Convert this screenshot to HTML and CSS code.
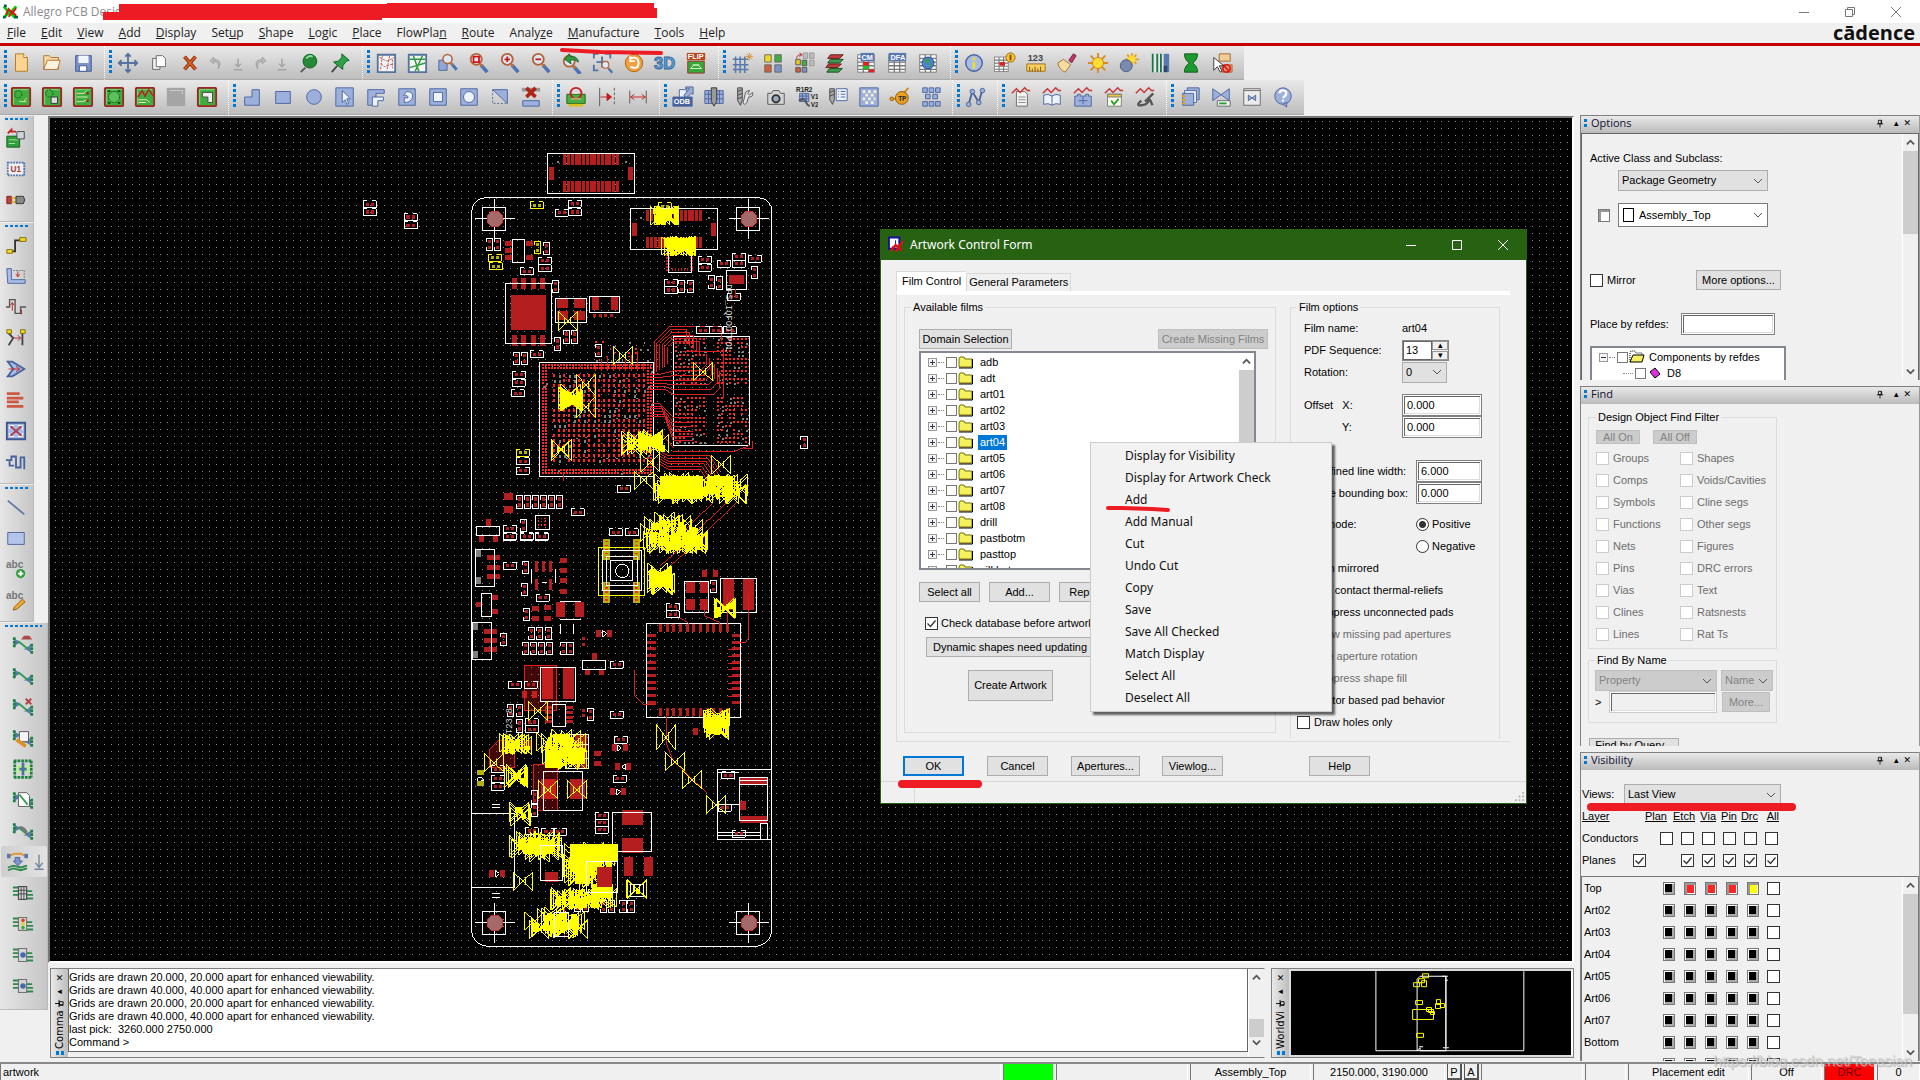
FILE: index.html
```html
<!DOCTYPE html>
<html lang="en">
<head>
<meta charset="utf-8">
<title>Allegro PCB Designer</title>
<link rel="stylesheet" href="styles.css">
</head>
<body>
<svg class="defs" aria-hidden="true">
  <symbol id="mag" viewBox="0 0 24 24"><path d="M14 14l7 8" stroke="#4a72b4" stroke-width="4"/><path d="M13 13l3 3" stroke="#c07030" stroke-width="2"/><circle cx="9" cy="8" r="6" fill="#dde8f6" stroke="#b4623a" stroke-width="2"/></symbol>
  <symbol id="pcb" viewBox="0 0 24 24"><rect x="2" y="2" width="20" height="20" rx="1" fill="#3fae3f" stroke="#a02626" stroke-width="2"/><path d="M4 20V4h16" stroke="#7fe07f" fill="none"/></symbol>
  <symbol id="net" viewBox="0 0 24 24"><path d="M2 6l6 3-6 0M2 12l6-3M22 12l-6 4h6M22 20l-6-4" stroke="#5878b0" stroke-width="2" fill="none"/><path d="M7 8l10 8" stroke="#2e9a4a" stroke-width="2"/><path d="M1 5h3M1 9h3M1 13h3M20 12h3M20 16h3M20 20h3" stroke="#1c8040" stroke-width="3"/></symbol>
  <symbol id="wave" viewBox="0 0 24 24"><path d="M2 8l5-5 4 4 5-5 3 3h3" stroke="#c43838" stroke-width="1.6" fill="none"/></symbol>
  <symbol id="grid" viewBox="0 0 24 24"><rect x="3" y="3" width="18" height="19" fill="#fff" stroke="#777"/><path d="M3 7h18M3 11h18M3 15h18M3 19h18M9 3v19M15 3v19" stroke="#777" stroke-width="1.4"/></symbol>
  <symbol id="chip" viewBox="0 0 24 24"><path d="M1 6h8v3M1 10h6M1 14h6M15 10h7M15 14h8M15 18h8" stroke="#2e8a4a" stroke-width="2" fill="none"/><rect x="7" y="5" width="9" height="14" fill="#d4d6da" stroke="#666"/></symbol>
  <symbol id="drop" viewBox="0 0 24 24"><path d="M12 6v10M8 13l4 4 4-4M6 21h12" stroke="#a4a4a4" stroke-width="2" fill="none"/></symbol>
  <symbol id="folder" viewBox="0 0 16 14"><path d="M1 12V4l1-2h4l1 2h7v8z" fill="#f4f060" stroke="#777000"/><path d="M14.500 4v9H1" stroke="#000" fill="none"/></symbol>
  <symbol id="pin" viewBox="0 0 10 10"><path d="M3 1h4v4H3zM1 5.500h8M5 5v5M6.500 1v4" stroke="#000" fill="none"/></symbol>
</svg>

<header class="titlebar">
  <svg class="appicon" viewBox="0 0 18 18"><path d="M2 3l4 5 4 1 5-6M3 14l5-5 6 6" stroke="#00d000" stroke-width="3" fill="none"/><path d="M4 12l3-6 4 4 4-5M7 14l4-5 4 4" stroke="#e01010" stroke-width="2" fill="none"/><path d="M2 1h3v3H2zM13 13h4v3h-4zM1 13h3v3H1z" fill="#064"/></svg>
  <h1>Allegro PCB Designer</h1>
  <div class="winctl">
    <button aria-label="Minimize"><svg viewBox="0 0 12 12"><path d="M1 6.500h10"/></svg></button>
    <button aria-label="Restore"><svg viewBox="0 0 12 12"><path d="M1.500 3.500h7v7h-7zM3.500 3V1.500h7v7H9"/></svg></button>
    <button aria-label="Close"><svg viewBox="0 0 12 12"><path d="M1 1l10 10M11 1L1 11"/></svg></button>
  </div>
</header>
<nav class="menubar">
  <a href="#"><u>F</u>ile</a><a href="#"><u>E</u>dit</a><a href="#"><u>V</u>iew</a><a href="#"><u>A</u>dd</a><a href="#"><u>D</u>isplay</a><a href="#">Set<u>u</u>p</a><a href="#"><u>S</u>hape</a><a href="#"><u>L</u>ogic</a><a href="#"><u>P</u>lace</a><a href="#">FlowPla<u>n</u></a><a href="#"><u>R</u>oute</a><a href="#">Analy<u>z</u>e</a><a href="#"><u>M</u>anufacture</a><a href="#"><u>T</u>ools</a><a href="#"><u>H</u>elp</a>
  <span class="logo">cādence</span>
</nav>

<div class="toolbars">
 <div class="row">
  <div class="group">
   <button class="tool" title="New"><svg viewBox="0 0 24 24"><path d="M6 2h9l4 4v15H6z" fill="#f9d591" stroke="#b07820"/><path d="M15 2v4h4" fill="#fff" stroke="#b07820"/></svg></button>
   <button class="tool" title="Open"><svg viewBox="0 0 24 24"><path d="M3 19V4h6l2 2h8v13z" fill="#f7d9a0" stroke="#b07030"/><path d="M7 9h14l-3 10H3z" fill="#fff3e0" stroke="#b07030"/></svg></button>
   <button class="tool" title="Save"><svg viewBox="0 0 24 24"><path d="M4 4h17v17H4z" fill="#7d93c8" stroke="#3c5590"/><path d="M7 4h11v8H7z" fill="#f2f5fb"/><path d="M8 15h8v6H8z" fill="#fff" stroke="#3c5590"/></svg></button>
  </div>
  <div class="group">
   <button class="tool" title="Move"><svg viewBox="0 0 24 24"><path d="M12 2v20M2 12h20M9 5l3-3 3 3M9 19l3 3 3-3M5 9l-3 3 3 3M19 9l3 3-3 3" stroke="#54739e" stroke-width="2" fill="none"/></svg></button>
   <button class="tool" title="Copy"><svg viewBox="0 0 24 24"><path d="M5 7h8v12H5z" fill="#eee" stroke="#666"/><path d="M9 4h7l3 3v9H9z" fill="#fff" stroke="#666"/></svg></button>
   <button class="tool" title="Delete"><svg viewBox="0 0 24 24"><path d="M6 5l12 14M18 5L6 19" stroke="#7c2410" stroke-width="4"/><path d="M6 5l12 14M18 5L6 19" stroke="#e0601c" stroke-width="2"/></svg></button>
   <button class="tool slim" title="Undo"><svg viewBox="0 0 24 24"><path d="M9 4L4 9l5 4V10q8 0 6 10 7-12-6-13z" fill="#b9b9b9" stroke="#999"/></svg></button>
   <button class="tool slim" title="Undo list"><svg><use href="#drop"/></svg></button>
   <button class="tool slim" title="Redo"><svg viewBox="0 0 24 24"><path d="M15 4l5 5-5 4V10q-8 0-6 10-7-12 6-13z" fill="#b9b9b9" stroke="#999"/></svg></button>
   <button class="tool slim" title="Redo list"><svg><use href="#drop"/></svg></button>
   <button class="tool" title="Fix"><svg viewBox="0 0 24 24"><path d="M8 17l-5 5" stroke="#555" stroke-width="2"/><circle cx="13" cy="10" r="7.500" fill="#258a38" stroke="#0f5a20"/><path d="M9 7q3-4 7-2" stroke="#8fe09a" stroke-width="2" fill="none"/></svg></button>
   <button class="tool" title="Unfix"><svg viewBox="0 0 24 24"><path d="M9 15l-6 7" stroke="#444" stroke-width="2"/><path d="M14 2l8 7-3 1-4 5 0 4L5 11l5-1 4-4z" fill="#2da347" stroke="#0f5a20"/></svg></button>
  </div>
  <div class="group">
   <button class="tool" title="Unrats all"><svg viewBox="0 0 24 24"><path d="M3 3h19v19H3z" fill="#f4f4f4" stroke="#54739e" stroke-width="2"/><path d="M5 6l8 4 8-4M6 12l4 4 10-3M8 4l-2 16M16 4l-3 16M19 8l0 10" stroke="#b85a5a" stroke-dasharray="3 1" fill="none"/></svg></button>
   <button class="tool" title="Rats all"><svg viewBox="0 0 24 24"><path d="M3 3h19v19H3z" fill="#f4f4f4" stroke="#54739e" stroke-width="2"/><path d="M4 8h17M4 17l17-5M8 4l6 17M18 4l-8 17" stroke="#2e9a3e" stroke-width="1.600" fill="none"/></svg></button>
   <button class="tool" title="Zoom by points"><svg viewBox="0 0 24 24"><path d="M2 9h9v11H2z" fill="#8fa6d8" stroke="#47639c"/><use href="#mag" x="4" y="0" width="20" height="22"/></svg></button>
   <button class="tool" title="Zoom fit"><svg viewBox="0 0 24 24"><use href="#mag"/><path d="M6 5h6v6H6z" fill="none" stroke="#d01818" stroke-width="2"/></svg></button>
   <button class="tool" title="Zoom in"><svg viewBox="0 0 24 24"><use href="#mag"/><path d="M9 5v6M6 8h6" stroke="#d01818" stroke-width="2"/></svg></button>
   <button class="tool" title="Zoom out"><svg viewBox="0 0 24 24"><use href="#mag"/><path d="M6 8h6" stroke="#d01818" stroke-width="2"/></svg></button>
   <button class="tool" title="Zoom previous"><svg viewBox="0 0 24 24"><use href="#mag" y="2"/><path d="M4 8l5-6 1 3q8-1 9 6-4-4-9-2l1 4z" fill="#2e9a3e" stroke="#14641f"/></svg></button>
   <button class="tool" title="Zoom selection"><svg viewBox="0 0 24 24"><path d="M2 7V2h5M14 2h6v5M2 14v6h5M11 5v12M5 11h12" stroke="#54739e" stroke-width="2" fill="none"/><use href="#mag" x="9" y="9" width="15" height="15"/></svg></button>
   <button class="tool" title="Redraw"><svg viewBox="0 0 24 24"><circle cx="12" cy="12" r="9.500" fill="#f0a040" stroke="#b06010"/><path d="M8 7q9-3 9 5t-9 4M8 4v6h5" stroke="#fff" stroke-width="2" fill="none"/></svg></button>
   <button class="tool" title="3D view"><svg viewBox="0 0 24 24"><text x="0" y="19" class="ic3d">3D</text></svg></button>
   <button class="tool" title="Flip design"><svg viewBox="0 0 24 24"><path d="M2 1h20v8H2z" fill="#b5481c"/><text x="3" y="8" class="icflip">FLIP</text><path d="M3 10h18v13H3z" fill="#38a838" stroke="#a02626"/><path d="M6 18q6-8 12 0zM8 14h8" fill="none" stroke="#d8f4d0"/></svg></button>
  </div>
  <div class="group">
   <button class="tool" title="Grid toggle"><svg viewBox="0 0 24 24"><path d="M2 8h17M2 14h17M2 19h17M5 5v18M10 5v18M15 5v18" stroke="#5878b0" stroke-width="1.600"/><path d="M20 1v8M16 5h8M17 2l6 6M23 2l-6 6" stroke="#d89030"/></svg></button>
   <button class="tool" title="Color"><svg viewBox="0 0 24 24"><path d="M3 3h7v8H3z" fill="#f0d820" stroke="#666"/><path d="M14 3h7v8h-7z" fill="#3fae3f" stroke="#666"/><path d="M3 14h7v8H3z" fill="#d06038" stroke="#666"/><path d="M14 14h7v8h-7z" fill="#7d93c8" stroke="#666"/></svg></button>
   <button class="tool" title="Shadow"><svg viewBox="0 0 24 24"><path d="M11 1h5v6h-5zM18 1h5v6h-5zM18 9h5v6h-5z" fill="#bbb" stroke="#999"/><path d="M3 8h5v6H3z" fill="#e8c820" stroke="#555"/><path d="M10 9h5v6h-5z" fill="#3fae3f" stroke="#555"/><path d="M3 17h5v5H3z" fill="#d06038" stroke="#555"/><path d="M10 17h5v5h-5z" fill="#7d93c8" stroke="#555"/><path d="M4 7q0-4 5-4M7 1l3 2-3 2" stroke="#c02020" fill="none"/></svg></button>
   <button class="tool" title="Layers"><svg viewBox="0 0 24 24"><path d="M7 3h14l-4 4H4z" fill="#c03c3c" stroke="#5b1b1b"/><path d="M7 8h14l-4 4H4z" fill="#3f9a50" stroke="#1b4b1b"/><path d="M5 13h14l-4 4H2z" fill="#c03c3c" stroke="#5b1b1b"/><path d="M6 18h14l-4 4H3z" fill="#3f9a50" stroke="#1b4b1b"/></svg></button>
   <button class="tool" title="Constraint manager"><svg viewBox="0 0 24 24"><use href="#grid"/><path d="M6 1h15v9H6z" fill="#5878b0"/><text x="7" y="9" class="icflip">CM</text><path d="M9 11h6v4H9zM15 19h6v3h-6z" fill="#e02020"/><path d="M9 15h6v4H9z" fill="#20c020"/></svg></button>
   <button class="tool" title="DFA"><svg viewBox="0 0 24 24"><use href="#grid"/><path d="M3 1h19v9H3z" fill="#5878b0"/><text x="5" y="9" class="icflip">DFA</text></svg></button>
   <button class="tool" title="Global"><svg viewBox="0 0 24 24"><use href="#grid"/><circle cx="12" cy="12" r="6.500" fill="#5080d0" stroke="#204890"/><path d="M8 9l5-2 1 3-3 3zM13 14l4-2-2 5z" fill="#38a048"/></svg></button>
  </div>
  <div class="group">
   <button class="tool" title="Information"><svg viewBox="0 0 24 24"><circle cx="12" cy="12" r="9" fill="#a9bce6" stroke="#47639c" stroke-width="1.500"/><path d="M12 6v3M12 11v7" stroke="#f0e020" stroke-width="3"/></svg></button>
   <button class="tool" title="Report"><svg viewBox="0 0 24 24"><use href="#grid" x="-2" y="2" width="20" height="22"/><path d="M6 11h6v4H6z" fill="#e02020"/><circle cx="18" cy="6" r="5" fill="#f4c820" stroke="#a06010"/><path d="M18 3v6" stroke="#804000" stroke-width="2"/></svg></button>
   <button class="tool" title="Measure"><svg viewBox="0 0 24 24"><text x="3" y="10" class="ic123">123</text><path d="M2 13h20v8H2z" fill="#f7d060" stroke="#a06a18"/><path d="M5 16v5M8 18v3M11 16v5M14 18v3M17 16v5" stroke="#805010"/></svg></button>
   <button class="tool" title="Brush"><svg viewBox="0 0 24 24"><path d="M14 9l5-7 3 2-5 8z" fill="#c03868" stroke="#702040"/><path d="M8 8l8 6-6 8q-7-3-8-10z" fill="#f5dca0" stroke="#a07030"/></svg></button>
   <button class="tool" title="Highlight"><svg viewBox="0 0 24 24"><path d="M12 1v22M1 12h22M4 4l16 16M20 4L4 20" stroke="#d88a20" stroke-width="2"/><circle cx="12" cy="12" r="6" fill="#ffdc30" stroke="#c88018"/></svg></button>
   <button class="tool" title="Dehighlight"><svg viewBox="0 0 24 24"><path d="M15 1v14M8 8h15M10 3l10 10M20 3L10 13" stroke="#e0a020" stroke-width="2"/><circle cx="15" cy="8" r="4" fill="#ffdc30"/><circle cx="9" cy="15" r="6.500" fill="#7a8bb0" stroke="#4a5878"/></svg></button>
   <button class="tool" title="Waive DRC"><svg viewBox="0 0 24 24"><path d="M2 2h20v20H2z" fill="#dfe8e4"/><path d="M4 2v20M9 2v20M13 2v20" stroke="#207048" stroke-width="2"/><path d="M16 2h6v20h-6z" fill="#5878b0"/><path d="M16 15h4v7h-4z" fill="#304870"/></svg></button>
   <button class="tool" title="Hourglass"><svg viewBox="0 0 24 24"><path d="M5 2h14v3q-1 4-5 7 4 3 5 7v3H5v-3q1-4 5-7-4-3-5-7z" fill="#1c9a30" stroke="#0c5818"/></svg></button>
   <button class="tool" title="Selection filter"><svg viewBox="0 0 24 24"><path d="M9 2h12v8H9z" fill="#f0cc98" stroke="#a06830"/><path d="M12 14h11v8H12z" fill="#f0a070" stroke="#a06830"/><circle cx="17" cy="18" r="4" fill="none" stroke="#d82020" stroke-width="2"/><path d="M14 15l6 6" stroke="#d82020" stroke-width="2"/><path d="M3 6v14l4-4 3 6 2-1-3-6h5z" fill="#fff" stroke="#333"/></svg></button>
  </div>
 </div>
 <div class="row">
  <div class="group">
   <button class="tool" title="General edit"><svg viewBox="0 0 24 24"><use href="#pcb"/><circle cx="9" cy="9" r="4" fill="none" stroke="#124a12" stroke-dasharray="2 1"/><path d="M10 17h5l3-4M18 17h-3" stroke="#e8e0a0" fill="none"/></svg></button>
   <button class="tool" title="Placement edit"><svg viewBox="0 0 24 24"><use href="#pcb"/><circle cx="9" cy="8" r="4" fill="none" stroke="#124a12" stroke-dasharray="2 1"/><path d="M11 12h7v7h-7z" fill="#ddd" stroke="#333"/></svg></button>
   <button class="tool" title="Etch edit"><svg viewBox="0 0 24 24"><use href="#pcb"/><path d="M5 8h8l3-3M5 12h12M5 17h7l4-2" stroke="#f0e8c0" fill="none"/><circle cx="17" cy="8" r="1.500" fill="#a02626"/><circle cx="17" cy="16" r="1.500" fill="#a02626"/></svg></button>
   <button class="tool" title="Flow planning"><svg viewBox="0 0 24 24"><use href="#pcb"/><circle cx="12" cy="12" r="6" fill="#5cc05c" stroke="#124a12" stroke-dasharray="2 1"/><path d="M5 6l3-1M16 5l3 1M5 18l3 1M16 19l3-1" stroke="#124a12" stroke-width="2" fill="none"/></svg></button>
   <button class="tool" title="Signal integrity"><svg viewBox="0 0 24 24"><use href="#pcb"/><path d="M4 12l5-7 3 6 4-7 5 7" stroke="#c02020" stroke-width="1.600" fill="none"/><path d="M5 15h9l3 3M5 18h8" stroke="#f0e8c0" fill="none"/></svg></button>
   <button class="tool" title="RF edit"><svg viewBox="0 0 24 24"><path d="M2 2h20v20H2z" fill="#a5a5a5"/><path d="M5 5h14v4" stroke="#d0d0d0" fill="none"/></svg></button>
   <button class="tool" title="Shape edit"><svg viewBox="0 0 24 24"><use href="#pcb"/><path d="M7 7h11v11h-5v-6H7z" fill="#eee" stroke="#444"/></svg></button>
  </div>
  <div class="group blues">
   <button class="tool" title="Shape polygon"><svg viewBox="0 0 24 24"><path d="M12 4h8v17H4V12h8z"/></svg></button>
   <button class="tool" title="Shape rectangle"><svg viewBox="0 0 24 24"><path d="M4 6h16v13H4z"/></svg></button>
   <button class="tool" title="Shape circle"><svg viewBox="0 0 24 24"><circle cx="12" cy="12" r="8"/></svg></button>
   <button class="tool" title="Shape select"><svg viewBox="0 0 24 24"><path d="M2 2h19v20H2z"/><path d="M9 5v13l3-3 2 5 2-1-2-5h4z" class="w"/></svg></button>
   <button class="tool" title="Void element"><svg viewBox="0 0 24 24"><path d="M3 4h18v4H12v13H3z"/><path d="M8 12h12v4h-6v6H8z" class="w"/></svg></button>
   <button class="tool" title="Void polygon"><svg viewBox="0 0 24 24"><path d="M3 3h18v18H3z"/><path d="M12 6q7 0 6 6t-9 6l0-5h4q1-3-5-3z" class="w"/></svg></button>
   <button class="tool" title="Void rectangle"><svg viewBox="0 0 24 24"><path d="M3 3h18v18H3z"/><path d="M7 7h10v10H7z" class="w"/></svg></button>
   <button class="tool" title="Void circle"><svg viewBox="0 0 24 24"><path d="M3 3h18v18H3z"/><circle cx="12" cy="12" r="6" class="w"/></svg></button>
   <button class="tool" title="Edit boundary"><svg viewBox="0 0 24 24"><path d="M4 4h16v15z"/><path d="M4 4v15h16" fill="none" stroke-dasharray="2 2"/></svg></button>
   <button class="tool" title="Delete islands"><svg viewBox="0 0 24 24"><path d="M3 16h18v6H3z"/><path d="M2 2h20v4H2z" fill="#999" stroke="none"/><path d="M7 2l10 10M17 2L7 12" stroke="#b02418" stroke-width="4"/></svg></button>
  </div>
  <div class="group">
   <button class="tool" title="Drill legend"><svg viewBox="0 0 24 24"><path d="M2 9h20v10H2z" fill="#48b040" stroke="#186018"/><path d="M4 21h16" stroke="#d8c020" stroke-width="3"/><circle cx="12" cy="8" r="6" fill="none" stroke="#c82020" stroke-width="2"/><path d="M7 14h10M9 8h6" stroke="#f0e8c0"/></svg></button>
   <button class="tool" title="Dimension edge"><svg viewBox="0 0 24 24"><path d="M4 2v20" stroke="#555"/><path d="M20 2v20" stroke="#555" stroke-dasharray="3 2"/><path d="M5 12h10M12 8l5 4-5 4z" fill="#c02020" stroke="#c02020"/></svg></button>
   <button class="tool" title="Linear dimension"><svg viewBox="0 0 24 24"><path d="M3 5v14M21 5v14" stroke="#555"/><path d="M4 12h16M8 9l-4 3 4 3M16 9l4 3-4 3" fill="none" stroke="#c02020"/></svg></button>
  </div>
  <div class="group blues">
   <button class="tool" title="ODB export"><svg viewBox="0 0 24 24"><path d="M8 4h8v10H8z" class="w"/><path d="M13 10l6-7h-4V1h8v8l-2-1-6 6z"/><path d="M1 12h21v10H1z" fill="#47639c"/><text x="2" y="20" class="icflip">ODB</text></svg></button>
   <button class="tool" title="Artwork"><svg viewBox="0 0 24 24"><path d="M2 5h20v14H2zM2 9h20M2 14h20M6 5v14M18 5v14"/><path d="M9 2h6v15l-3 5-3-5z" fill="#999" stroke="#333"/></svg></button>
   <button class="tool" title="NC parameters"><svg viewBox="0 0 24 24"><path d="M4 2h5v14l-2 5-3-5zM4 6l5-2M4 10l5-2M4 14l5-2" fill="#aaa" stroke="#444"/><path d="M20 7l-3 3-2-2 2-3q-5 0-5 5l-2 8q1 4 4 0l2-6q6 0 4-5z" fill="#e0e4ea" stroke="#555"/></svg></button>
   <button class="tool" title="Snapshot"><svg viewBox="0 0 24 24"><path d="M3 8h4l2-3h6l2 3h4v12H3z" fill="#d4d4d4" stroke="#555"/><circle cx="12" cy="14" r="4" fill="#9ab" stroke="#333" stroke-width="2"/></svg></button>
   <button class="tool" title="Rename refdes"><svg viewBox="0 0 24 24"><text x="0" y="6" class="ictiny">R1R2</text><path d="M4 8h10v9H4zM4 11h10M4 14h10M7 8v9M11 8v9"/><path d="M3 16l5-2 2 2q2 5 5 6" fill="none" stroke="#555" stroke-width="2"/><text x="16" y="14" class="ictiny">V1</text><text x="16" y="23" class="ictiny">V2</text></svg></button>
   <button class="tool" title="Drill table"><svg viewBox="0 0 24 24"><path d="M3 3h5v12l-2 5-3-5zM3 7l5-2M3 11l5-2" fill="#aaa" stroke="#444"/><path d="M10 3h12v13H10z" class="w"/><path d="M12 6h1M15 6h5M12 9h1M15 9h5M12 12h1M15 12h5"/></svg></button>
   <button class="tool" title="Thieving"><svg viewBox="0 0 24 24"><path d="M2 2h20v20H2z"/><path d="M5 6h3M11 6h3M17 6h3M8 10h3M14 10h3M5 14h3M11 14h3M17 14h2M8 18h3M14 18h3" stroke="#f4f0d0" stroke-width="3"/></svg></button>
   <button class="tool" title="Testpoint"><svg viewBox="0 0 24 24"><path d="M2 14h8M16 8l5-6" stroke="#d08818" stroke-width="2"/><circle cx="3" cy="14" r="2" fill="#e8a020" stroke="#905808"/><circle cx="14" cy="13" r="7" fill="#e8a020" stroke="#905808"/><text x="10" y="16" class="ictiny">TP</text></svg></button>
   <button class="tool" title="Panelize"><svg viewBox="0 0 24 24"><path d="M3 2h5v5H3zM10 2h5v5h-5zM17 2h5v5h-5zM6 9h5v5H6zM14 9h5v5h-5zM3 17h5v5H3zM10 17h5v5h-5zM17 17h5v5h-5z"/></svg></button>
  </div>
  <div class="group blues">
   <button class="tool" title="Net route"><svg viewBox="0 0 24 24"><path d="M4 20L8 6l7 12 4-14" fill="none" stroke-width="2"/><circle cx="4" cy="20" r="2.500"/><circle cx="8" cy="6" r="2.500"/><circle cx="15" cy="18" r="2.500"/><circle cx="19" cy="5" r="2.500"/></svg></button>
  </div>
  <div class="group blues">
   <button class="tool" title="Signal report"><svg viewBox="0 0 24 24"><path d="M7 6h9l3 3v13H7z" fill="#f2f2f2" stroke="#666"/><path d="M9 12h8M9 15h8M9 18h8" stroke="#888"/><use href="#wave"/></svg></button>
   <button class="tool" title="Signal library"><svg viewBox="0 0 24 24"><path d="M3 10q5-2 9 1 4-3 9-1v10q-5-2-9 1-4-3-9-1zM12 11v10" class="w"/><use href="#wave"/></svg></button>
   <button class="tool" title="Signal model"><svg viewBox="0 0 24 24"><path d="M3 11h3v-2h3v2h6v-2h3v2h3v11H3z"/><path d="M12 12v8M7 16h10" class="w"/><use href="#wave"/></svg></button>
   <button class="tool" title="Signal audit"><svg viewBox="0 0 24 24"><path d="M5 9h15v13H5z" fill="#fffef0" stroke="#777"/><path d="M5 9h15v3H5z" fill="#e8c840" stroke="#777"/><path d="M9 16l3 4 5-6" fill="none" stroke="#20a030" stroke-width="2"/><use href="#wave"/></svg></button>
   <button class="tool" title="Signal probe"><svg viewBox="0 0 24 24"><path d="M21 8l-9 9M8 16q-7 6 0 5t8-5 4 5" fill="none" stroke="#555" stroke-width="2.500"/><use href="#wave"/></svg></button>
  </div>
  <div class="group blues">
   <button class="tool" title="Reports"><svg viewBox="0 0 24 24"><path d="M9 2h13v13H9z"/><path d="M6 5h13v13H6z" class="w"/><path d="M4 8h12v13H4z"/><path d="M3 11h4M3 15h4M3 19h4" stroke="#e0a020" stroke-width="2"/></svg></button>
   <button class="tool" title="DRC update"><svg viewBox="0 0 24 24"><path d="M3 3l18 13V3L3 16z"/><path d="M8 16h14v6H8z" fill="#f4f4f4" stroke="#666"/><path d="M10 19h8" stroke="#20a030" stroke-width="2"/></svg></button>
   <button class="tool" title="DRC browser"><svg viewBox="0 0 24 24"><path d="M3 3h18v18H3z" fill="#ececec" stroke="#666"/><path d="M3 5h18" stroke="#666"/><path d="M8 10l8 6v-6l-8 6z"/></svg></button>
   <button class="tool" title="Help"><svg viewBox="0 0 24 24"><circle cx="12" cy="11" r="9"/><path d="M12 20l4 3v-5z"/><path d="M8 8q1-4 5-3t2 5l-3 3M12 15v2" fill="none" stroke="#fff" stroke-width="2.500"/></svg></button>
  </div>
 </div>
</div>

<main class="workspace">
 <aside class="sidebars">
  <div class="vbar">
   <button class="tool" title="Place manual"><svg viewBox="0 0 24 24"><path d="M2 10h14v12H2z" fill="#2fa03c" stroke="#125a1c"/><path d="M4 14h10M4 18h7" stroke="#a8e8a8"/><path d="M13 5h8v8h-8z" fill="#d0d4dc" stroke="#444"/><path d="M3 7l4-4v2h5" stroke="#c02020" stroke-width="2" fill="none"/></svg></button>
   <button class="tool" title="Place component"><svg viewBox="0 0 24 24"><path d="M3 5h18v14H3z" fill="#eee" stroke="#5070a8" stroke-width="2" stroke-dasharray="2 1"/><text x="6" y="15" class="icred">U1</text></svg></button>
   <button class="tool" title="Place part"><svg viewBox="0 0 24 24"><path d="M2 8h5v8H2z" fill="#c04040" stroke="#702020"/><path d="M7 10h6M7 14h6" stroke="#e0b020" stroke-width="2"/><path d="M12 8h8q3 4 0 8h-8z" fill="#888" stroke="#333"/></svg></button>
  </div>
  <div class="vbar">
   <button class="tool" title="Add connect"><svg viewBox="0 0 24 24"><path d="M3 19h8V7h9" stroke="#333" stroke-width="2" fill="none"/><path d="M2 17h6v4H2zM16 4h7v4h-7z" fill="#f4dc20" stroke="#806800"/></svg></button>
   <button class="tool" title="Slide"><svg viewBox="0 0 24 24"><path d="M2 4h5v12h15v4H3z" fill="#a9bce6" stroke="#47639c"/><path d="M9 6h12v8" stroke="#777" stroke-dasharray="2 1" fill="none"/><path d="M14 7v5M12 10l2 3 2-3" stroke="#c02020" fill="none"/></svg></button>
   <button class="tool" title="Delay tune"><svg viewBox="0 0 24 24"><path d="M1 12h4V4h6v15h6v-7h6" stroke="#555" stroke-width="1.500" fill="none"/><path d="M8 16V8M6 10l2-3 2 3M18 15v5" stroke="#c02020" fill="none"/></svg></button>
   <button class="tool" title="Custom smooth"><svg viewBox="0 0 24 24"><path d="M4 7l5 5-5 8M19 5v15" stroke="#444" stroke-width="2" fill="none"/><path d="M10 12h7M14 9l3 3-3 3" stroke="#c02020" fill="none"/><path d="M2 3h5v4H2zM17 3h5v4h-5z" fill="#f4dc20" stroke="#806800"/></svg></button>
   <button class="tool" title="Fanout"><svg viewBox="0 0 24 24"><path d="M3 4h5l13 8-13 8H3l6-8z" fill="#a9bce6" stroke="#47639c" stroke-width="2"/><path d="M4 12h12M12 9l4 3-4 3" stroke="#c02020" fill="none"/></svg></button>
   <button class="tool" title="Bus route"><svg viewBox="0 0 24 24"><path d="M2 5h14M2 10h18M2 14h13M2 19h18" stroke="#cc5840" stroke-width="3"/></svg></button>
   <button class="tool" title="Route"><svg viewBox="0 0 24 24"><path d="M2 3h20v18H2z" fill="#a9bce6" stroke="#3c5590" stroke-width="2"/><path d="M5 6l14 12M19 6L5 18" stroke="#b04050" stroke-width="2"/><path d="M5 10V6h5M14 6h5v5M5 14v4h5M19 14v4h-5" stroke="#fff" fill="none"/></svg></button>
   <button class="tool" title="Spread"><svg viewBox="0 0 24 24"><path d="M1 10h6V6h5v12h5V7h4v13M5 10v6h5" stroke="#47639c" stroke-width="2" fill="none"/></svg></button>
  </div>
  <div class="vbar">
   <button class="tool" title="Add line"><svg viewBox="0 0 24 24"><path d="M3 5l18 15" stroke="#6078a8" stroke-width="2"/></svg></button>
   <button class="tool" title="Add rectangle"><svg viewBox="0 0 24 24"><path d="M3 6h18v13H3z" fill="#b4c4ea" stroke="#47639c"/></svg></button>
   <button class="tool" title="Add text"><svg viewBox="0 0 24 24"><text x="1" y="11" class="icabc">abc</text><circle cx="17" cy="17" r="5" fill="#2a9c3a"/><path d="M17 14v6M14 17h6" stroke="#fff" stroke-width="2"/></svg></button>
   <button class="tool" title="Edit text"><svg viewBox="0 0 24 24"><text x="1" y="11" class="icabc">abc</text><path d="M10 20l9-9 3 3-9 8-4 1z" fill="#f0a830" stroke="#905808"/></svg></button>
  </div>
  <div class="vbar wide">
   <button class="tool" title="Net fix"><svg viewBox="0 0 24 24"><use href="#net"/><path d="M10 6h12l-3-4h-6z" fill="#b04848"/></svg></button>
   <button class="tool" title="Net plan"><svg><use href="#net"/></svg></button>
   <button class="tool" title="Net delete"><svg viewBox="0 0 24 24"><use href="#net"/><path d="M15 3l6 6M21 3l-6 6" stroke="#b04040" stroke-width="2"/></svg></button>
   <button class="tool" title="Net edit"><svg viewBox="0 0 24 24"><use href="#net"/><path d="M8 5h10v11H8z" fill="#f4f4f4" stroke="#555"/><path d="M5 14l10 7" stroke="#e09020" stroke-width="4"/></svg></button>
   <button class="tool" title="Net bundle"><svg viewBox="0 0 24 24"><path d="M2 3h20M2 21h20M3 3v18M21 3v18" stroke="#1c8040" stroke-width="3" stroke-dasharray="3 1"/><path d="M5 8h14v8H5z" fill="#b8f090"/><path d="M12 5v14M8 12h8" stroke="#5070a8" stroke-width="3"/></svg></button>
   <button class="tool" title="Net report"><svg viewBox="0 0 24 24"><use href="#net"/><path d="M7 4h9l3 3v12H7z" fill="#fff" stroke="#555"/><path d="M8 6l9 11" stroke="#2e9a4a" stroke-width="2"/></svg></button>
   <button class="tool" title="Net route"><svg viewBox="0 0 24 24"><use href="#net"/><path d="M8 8q7 0 8 8" stroke="#777" stroke-width="3" fill="none"/></svg></button>
   <div class="pair"><button class="tool" title="Flow auto"><svg viewBox="0 0 24 24"><path d="M2 5h3l4-2h7l4 2h3" stroke="#e09830" stroke-width="2" fill="none"/><path d="M1 3h4v5H1zM20 3h4v5h-4z" fill="#5878b0"/><path d="M2 18l6-2 8 2 7-2M2 21l6-2 8 2 7-2" stroke="#2e8a4a" stroke-width="2" fill="none"/><path d="M10 7h5v4h3l-5 5-5-5h2z" fill="#7d93c8" stroke="#47639c"/></svg></button><button class="more" aria-label="More"><svg viewBox="0 0 14 20"><path d="M7 2v13M3 11l4 5 4-5M2 18h10" stroke="#6e8498" stroke-width="1.500" fill="none"/></svg></button></div>
   <button class="tool" title="Table"><svg viewBox="0 0 24 24"><use href="#chip"/><path d="M7 5h9v14H7zM7 9h9M7 13h9M10 5v14M13 5v14" stroke="#444" fill="none"/></svg></button>
   <button class="tool" title="Status"><svg viewBox="0 0 24 24"><use href="#chip"/><circle cx="12" cy="8" r="2" fill="#e04020"/><circle cx="12" cy="12" r="2" fill="#e8d020"/><circle cx="12" cy="16" r="2" fill="#30b030"/></svg></button>
   <button class="tool" title="Pin in"><svg viewBox="0 0 24 24"><use href="#chip"/><circle cx="12" cy="12" r="3" fill="#4868b0"/></svg></button>
   <button class="tool" title="Pin out"><svg viewBox="0 0 24 24"><use href="#chip"/><circle cx="12" cy="12" r="3" fill="#4868b0"/></svg></button>
  </div>
 </aside>

 <section class="center">
  <div class="canvas"><svg id="board" role="img" aria-label="Board layout">
   <defs><pattern id="dots" width="7" height="7" patternUnits="userSpaceOnUse"><rect x="5" y="3" width="1" height="1" fill="#8a8a8a"/></pattern></defs>
   <rect width="100%" height="100%" fill="url(#dots)"/>
  </svg></div>
  <div class="dock">
   <section class="command">
    <div class="strip"><span class="sx">✕</span><span class="sa">◂</span><svg class="sp"><use href="#pin"/></svg><b>Command</b><i></i></div>
    <div class="log">Grids are drawn 20.000, 20.000 apart for enhanced viewability.<br>Grids are drawn 40.000, 40.000 apart for enhanced viewability.<br>Grids are drawn 20.000, 20.000 apart for enhanced viewability.<br>Grids are drawn 40.000, 40.000 apart for enhanced viewability.<br>last pick:&nbsp; 3260.000 2750.000<br>Command &gt;</div>
    <div class="scroll end"><svg viewBox="0 0 10 10"><path d="M1 7l4-4 4 4"/></svg><div class="thumb t-log"></div><svg viewBox="0 0 10 10"><path d="M1 3l4 4 4-4"/></svg></div>
   </section>
   <section class="world">
    <div class="strip"><span class="sx">✕</span><span class="sa">◂</span><svg class="sp"><use href="#pin"/></svg><b>WorldView</b><i></i></div>
    <div class="map"><svg viewBox="0 0 282 84"><g fill="none" stroke="#fff"><path d="M85.500 0v80h149V0"/><path d="M127 8v72l3-3v3h26V5h-26l-3 3M156 76V5"/><path d="M152 5h6M155 9h3M153 77h6M129 76h4"/></g><g fill="none" stroke="#ff0" stroke-width="1"><path d="M122.500 38.500h21v10h-21zM123.500 11.500h6v4h-6zM131.500 9.500h5v6h-5zM132.500 2.500h6v4h-6zM128.500 7.500h6v4h-6zM125.500 29.500h7v4h-7zM126.500 62.500h7v4h-7zM146.500 28.500h4v5h-4zM145.500 32.500h5v5h-5zM150.500 32.500h4v4h-4z"/><path d="M136.500 36.500h5v4h-5zM138.500 38.500h5v3h-5zM140.500 40.500h4v3h-4z"/></g></svg></div>
   </section>
  </div>
 </section>

 <aside class="panels">
  <section class="panel p-options">
   <h2>Options<span class="pc"><svg><use href="#pin"/></svg><span>▴</span><span>✕</span></span></h2>
   <div class="pbody framed">
    <form class="opts">
     <p>Active Class and Subclass:</p>
     <div class="o-class"><select aria-label="Active class" class="sel"><option>Package Geometry</option></select></div>
     <div class="o-sub"><button type="button" class="swatch on" aria-label="Subclass colour"></button><div class="subsel"><span class="box"></span><select aria-label="Subclass" class="sel white"><option>Assembly_Top</option></select></div></div>
     <div class="o-mirror"><label><input type="checkbox">Mirror</label><button type="button" class="btn">More options...</button></div>
     <div class="o-place"><label for="refdes">Place by refdes:</label><input id="refdes" class="field" type="text"></div>
     <ul class="otree">
      <li><span class="exp minus"></span><span class="dots"></span><input type="checkbox" aria-label="Components by refdes"><svg viewBox="0 0 16 14"><path d="M1 12V3l1-2h4l1 2h6v3" fill="#fff" stroke="#000" stroke-dasharray="1 1"/><path d="M1 12l3-7h11l-2 7z" fill="#f4f060" stroke="#000"/></svg>Components by refdes</li>
      <li class="sub"><span class="dots"></span><input type="checkbox" aria-label="D8"><svg viewBox="0 0 16 14"><path d="M3 6l5-4 5 6-5 4z" fill="#e030e0" stroke="#000"/></svg>D8</li>
     </ul>
    </form>
    <div class="scroll"><svg viewBox="0 0 10 10"><path d="M1 7l4-4 4 4"/></svg><div class="thumb t-opt"></div><svg viewBox="0 0 10 10"><path d="M1 3l4 4 4-4"/></svg></div>
   </div>
  </section>
  <section class="panel p-find">
   <h2>Find<span class="pc"><svg><use href="#pin"/></svg><span>▴</span><span>✕</span></span></h2>
   <div class="pbody find">
    <fieldset class="filter"><legend>Design Object Find Filter</legend>
     <div class="allrow"><button class="btn" disabled>All On</button><button class="btn" disabled>All Off</button></div>
     <div class="checks">
      <label><input type="checkbox" disabled>Groups</label><label><input type="checkbox" disabled>Shapes</label>
      <label><input type="checkbox" disabled>Comps</label><label><input type="checkbox" disabled>Voids/Cavities</label>
      <label><input type="checkbox" disabled>Symbols</label><label><input type="checkbox" disabled>Cline segs</label>
      <label><input type="checkbox" disabled>Functions</label><label><input type="checkbox" disabled>Other segs</label>
      <label><input type="checkbox" disabled>Nets</label><label><input type="checkbox" disabled>Figures</label>
      <label><input type="checkbox" disabled>Pins</label><label><input type="checkbox" disabled>DRC errors</label>
      <label><input type="checkbox" disabled>Vias</label><label><input type="checkbox" disabled>Text</label>
      <label><input type="checkbox" disabled>Clines</label><label><input type="checkbox" disabled>Ratsnests</label>
      <label><input type="checkbox" disabled>Lines</label><label><input type="checkbox" disabled>Rat Ts</label>
     </div>
    </fieldset>
    <fieldset class="byname"><legend>Find By Name</legend>
     <div class="bn1"><select class="sel" disabled aria-label="Find type"><option>Property</option></select><select class="sel" disabled aria-label="Find mode"><option>Name</option></select></div>
     <div class="bn2"><label for="findname">&gt;</label><input id="findname" class="field" type="text" disabled><button class="btn" disabled>More...</button></div>
    </fieldset>
    <button class="btn query">Find by Query...</button>
   </div>
  </section>
  <section class="panel p-vis">
   <h2>Visibility<span class="pc"><svg><use href="#pin"/></svg><span>▴</span><span>✕</span></span></h2>
   <div class="pbody vis">
    <div class="views"><label for="views">Views:</label><select id="views" class="sel"><option>Last View</option></select><span class="mark"></span></div>
    <table class="vt">
     <thead><tr><th class="l">Layer</th><th></th><th class="r">Plan</th><th>Etch</th><th>Via</th><th>Pin</th><th>Drc</th><th>All</th></tr></thead>
     <tbody>
      <tr><td class="l">Conductors</td><td></td><td><input type="checkbox" aria-label="Plan"></td><td><input type="checkbox" aria-label="Etch"></td><td><input type="checkbox" aria-label="Via"></td><td><input type="checkbox" aria-label="Pin"></td><td><input type="checkbox" aria-label="Drc"></td><td><input type="checkbox" aria-label="All"></td></tr>
      <tr><td class="l">Planes</td><td><input type="checkbox" checked aria-label="Planes"></td><td></td><td><input type="checkbox" checked aria-label="Etch"></td><td><input type="checkbox" checked aria-label="Via"></td><td><input type="checkbox" checked aria-label="Pin"></td><td><input type="checkbox" checked aria-label="Drc"></td><td><input type="checkbox" checked aria-label="All"></td></tr>
     </tbody>
    </table>
    <div class="layers">
     <table class="vt" id="layers"><tbody></tbody></table>
     <div class="scroll"><svg viewBox="0 0 10 10"><path d="M1 7l4-4 4 4"/></svg><div class="thumb t-vis"></div><svg viewBox="0 0 10 10"><path d="M1 3l4 4 4-4"/></svg></div>
    </div>
   </div>
  </section>
 </aside>
</main>

<footer class="status">
 <span class="s-msg">artwork</span><span class="s-green"></span><span class="s-a"></span><span class="s-layer">Assembly_Top</span><span class="s-xy">2150.000, 3190.000</span><button>P</button><button>A</button><span class="s-b"></span><span class="s-c"></span><span class="s-mode">Placement edit</span><span class="s-off">Off</span><span class="s-drc">DRC</span><span class="s-n">0</span>
</footer>

<div class="dialog" role="dialog" aria-label="Artwork Control Form">
 <header><svg class="dicon" viewBox="0 0 18 18"><path d="M1 1h11v12H1z" fill="#fff" stroke="#10109a" stroke-width="2"/><path d="M8 4v4M4 11h6" stroke="#10109a"/><path d="M3 15l5-6 3 2 5-6M8 16l4-5 2 4" stroke="#e01010" stroke-width="2.500" fill="none"/></svg><h2>Artwork Control Form</h2>
  <button aria-label="Minimize"><svg viewBox="0 0 12 12"><path d="M1 6.500h10"/></svg></button><button aria-label="Maximize"><svg viewBox="0 0 12 12"><path d="M1.500 1.500h9v9h-9z"/></svg></button><button aria-label="Close"><svg viewBox="0 0 12 12"><path d="M1 1l10 10M11 1L1 11"/></svg></button>
 </header>
 <div class="tabs"><button class="active">Film Control</button><button>General Parameters</button></div>
 <div class="tabpanel">
  <fieldset class="films"><legend>Available films</legend>
   <div class="frow"><button class="btn">Domain Selection</button><button class="btn" disabled>Create Missing Films</button></div>
   <div class="treebox"><ul class="tree" id="films"></ul>
    <div class="scroll"><svg viewBox="0 0 10 10"><path d="M1 7l4-4 4 4"/></svg><div class="thumb t-film"></div></div></div>
   <div class="acts"><button class="btn">Select all</button><button class="btn">Add...</button><button class="btn">Replace</button></div>
   <label class="chk"><input type="checkbox" checked>Check database before artwork</label>
   <button class="btn dyn">Dynamic shapes need updating</button>
   <button class="btn create">Create Artwork</button>
  </fieldset>
  <fieldset class="fopts"><legend>Film options</legend>
   <div class="f"><span>Film name:</span><span>art04</span></div>
   <div class="f"><label for="seq">PDF Sequence:</label><div class="spin"><input id="seq" type="text" value="13"><span><button aria-label="Up">▴</button><button aria-label="Down">▾</button></span></div></div>
   <div class="f gap"><label for="rot">Rotation:</label><select id="rot" class="sel rot"><option>0</option></select></div>
   <div class="f"><label for="ox">Offset&nbsp;&nbsp; X:</label><input id="ox" class="field" type="text" value="0.000"></div>
   <div class="f gap2"><label for="oy" class="yy">Y:</label><input id="oy" class="field" type="text" value="0.000"></div>
   <div class="f g"><label for="uw">Undefined line width:</label><input id="uw" class="field" type="text" value="6.000"></div>
   <div class="f g gap3"><label for="bb">Shape bounding box:</label><input id="bb" class="field" type="text" value="0.000"></div>
   <div class="f g"><span>Plot mode:</span><label class="rad"><input type="radio" name="pm" checked>Positive</label></div>
   <div class="f g"><span></span><label class="rad"><input type="radio" name="pm">Negative</label></div>
   <label class="c"><input type="checkbox">Film mirrored</label>
   <label class="c"><input type="checkbox">Full contact thermal-reliefs</label>
   <label class="c"><input type="checkbox" checked>Suppress unconnected pads</label>
   <label class="c off"><input type="checkbox" disabled>Draw missing pad apertures</label>
   <label class="c off"><input type="checkbox" disabled>Use aperture rotation</label>
   <label class="c off"><input type="checkbox" disabled>Suppress shape fill</label>
   <label class="c"><input type="checkbox" checked>Vector based pad behavior</label>
   <label class="c"><input type="checkbox">Draw holes only</label>
  </fieldset>
 </div>
 <div class="dbtns"><button class="btn ok">OK</button><button class="btn">Cancel</button><button class="btn ap">Apertures...</button><button class="btn">Viewlog...</button><button class="btn help">Help</button></div>
 <div class="dstatus"><span></span><svg viewBox="0 0 10 10"><path d="M8 0h2v2H8zM8 4h2v2H8zM8 8h2v2H8zM4 4h2v2H4zM4 8h2v2H4zM0 8h2v2H0z" fill="#b4b4b4"/></svg><i class="okmark"></i></div>
 <div class="ctx" role="menu">
  <button role="menuitem">Display for Visibility</button><button role="menuitem">Display for Artwork Check</button><button role="menuitem">Add</button><button role="menuitem">Add Manual</button><button role="menuitem">Cut</button><button role="menuitem">Undo Cut</button><button role="menuitem">Copy</button><button role="menuitem">Save</button><button role="menuitem">Save All Checked</button><button role="menuitem">Match Display</button><button role="menuitem">Select All</button><button role="menuitem">Deselect All</button>
  <svg class="addmark" viewBox="0 0 64 8"><path d="M2 3h14l30 1 16 1" stroke="#ed1c24" stroke-width="4" stroke-linecap="round" fill="none"/></svg>
 </div>
</div>
<svg class="ink" aria-hidden="true"><path d="M119 4H387V3H654V8H657V18H382V20H103V12H119Z" fill="#ed1c24"/><path d="M562 50L600 52 661 53" stroke="#ed1c24" stroke-width="4" stroke-linecap="round" fill="none"/></svg>
<div class="watermark">https://blog.csdn.net/Toeasian</div>
<script src="script.js"></script>
</body>
</html>
```
FILE: styles.css
```css
* { box-sizing: border-box; }
body { margin: 0; height: 100vh; display: flex; flex-direction: column; overflow: hidden; background: #f0f0f0; color: #000; font: 11px/13px "Liberation Sans", Arial, sans-serif; }
button, input, select { font: inherit; color: inherit; margin: 0; }
button { border: 0; background: none; padding: 0; }
h1, h2, p, ul { margin: 0; padding: 0; font-weight: normal; list-style: none; }
fieldset { margin: 0; padding: 0; min-width: 0; border: 1px solid #dcdcdc; }
legend { padding: 0 2px; }
svg { display: block; }
.defs { position: absolute; width: 0; height: 0; }

.titlebar { height: 23px; flex: none; display: flex; align-items: center; background: #fff; color: #8a8a8a; font: 12px/16px "Open Sans", sans-serif; }
.titlebar h1 { font-size: 12px; flex: 1; }
.appicon { width: 17px; height: 18px; margin: 0 4px 0 2px; }
.winctl { display: flex; gap: 34px; padding-right: 18px; }
.winctl svg, .dialog header button svg { width: 12px; height: 12px; fill: none; stroke: #777; }
.menubar { height: 23px; flex: none; display: flex; align-items: center; gap: 15px; padding: 0 5px 0 7px; border-bottom: 3px solid #c40000; font: 12px/16px "Open Sans", sans-serif; }
.menubar a { color: #222; text-decoration: none; }
.logo { margin-left: auto; font: bold 20px/20px "Open Sans", sans-serif; color: #111; }

.toolbars { flex: none; }
.row { display: flex; height: 34px; }
.row + .row { height: 35px; }
.group { display: flex; align-items: center; padding: 0 7px 0 8px; background: linear-gradient(#e9e9e9, #bdbdbd); border-bottom: 1px solid #aaa; position: relative; }
.group + .group { border-left: 1px dotted #fff; padding-left: 7px; }
.row + .row .group { padding-right: 6px; }
.row .group:first-child { padding: 0 6px 0 5px; }
.group::before { content: ""; position: absolute; left: 4px; top: 4px; bottom: 6px; width: 3px; background: repeating-linear-gradient(#0078d7 0 3px, transparent 3px 5px); }
.tool { width: 31px; height: 31px; display: flex; align-items: center; justify-content: center; flex: none; }
.tool svg { width: 22px; height: 22px; fill: none; }
.tool.slim { width: 22px; }
.tool.slim svg { width: 18px; height: 20px; }
.blues svg { fill: #9db0dc; stroke: #47639c; }
.blues .w { fill: #eef2fa; }
.ic3d { font: bold 18px "Liberation Sans", sans-serif; fill: #6ea8d8; stroke: #2c6498; }
.icflip { font: bold 8px "Liberation Sans", sans-serif; fill: #fff; stroke: none; }
.ictiny { font: bold 7px "Liberation Sans", sans-serif; fill: #222; stroke: none; }
.ic123 { font: bold 10px "Liberation Sans", sans-serif; fill: #444; }
.icabc { font: bold 11px "Liberation Sans", sans-serif; fill: #777; }
.icred { font: bold 9px "Liberation Sans", sans-serif; fill: #a04040; }

.workspace { flex: 1; display: flex; min-height: 0; }
.sidebars { width: 48px; flex: none; }
.vbar { width: 34px; padding: 6px 0; background: linear-gradient(90deg, #e6e6e6, #c6c6c6); border: 1px solid #bbb; border-left: 0; border-top-color: #eee; position: relative; }
.vbar::before { content: ""; position: absolute; top: 2px; left: 5px; right: 5px; height: 2px; background: repeating-linear-gradient(90deg, #0078d7 0 3px, transparent 3px 5px); }
.vbar.wide { width: 48px; padding-left: 7px; padding-bottom: 8px; }
.pair { display: flex; margin-left: -6px; width: 46px; background: linear-gradient(90deg, #cfcfcf, #e2e2e2); border-radius: 2px; }
.pair .more { width: 14px; height: 31px; display: flex; align-items: center; }
.more svg { width: 14px; height: 18px; }

.center { flex: 1; min-width: 0; display: flex; flex-direction: column; padding-top: 1px; }
.canvas { flex: 1; min-height: 0; background: #000; border: 2px solid #777; border-right-color: #fff; border-bottom-color: #fff; }
.canvas svg { width: 100%; height: 100%; }
.brd { fill: none; stroke: #fff; stroke-width: 3; shape-rendering: crispEdges; }
.brd .pad { fill: #b41e1e; stroke: none; }
.brd .red { fill: #ff2626; stroke: none; }
.brd .gry { fill: #808080; stroke: none; }
.brd .tr { stroke: #d82020; }
.brd .yl { stroke: #ff0; }
.brd .ylf { fill: #ff0; stroke: none; }
.brd .olv { fill: #b4b400; stroke: none; }
.brd .ghost { fill: #ff2020; fill-opacity: .25; stroke: #e02020; }
.brd .hole { fill: #a46a6a; stroke: #d03030; }
.brd text { fill: #ddd; stroke: none; font: 26px "Liberation Mono", monospace; }

.dock { display: flex; gap: 6px; height: 90px; margin: 5px 0 4px; flex: none; padding-left: 2px; }
.command { flex: 1; display: flex; border: 1px solid #808080; border-right-color: #f0f0f0; min-width: 0; }
.world { width: 303px; display: flex; border: 1px solid #808080; }
.strip { width: 17px; flex: none; display: flex; flex-direction: column; align-items: center; background: linear-gradient(90deg, #e9e9e9, #bdbdbd); font: bold 9px/13px "DejaVu Sans", sans-serif; padding-top: 3px; }
.strip svg { width: 9px; height: 9px; transform: rotate(90deg); margin-top: 1px; }
.strip b { writing-mode: vertical-rl; transform: rotate(180deg); height: 38px; margin-top: 3px; overflow: hidden; font: 10px/13px "DejaVu Sans", sans-serif; }
.strip i { width: 8px; height: 4px; margin-top: 2px; background: repeating-linear-gradient(90deg, #0078d7 0 3px, transparent 3px 5px); }
.log { flex: 1; background: #fff; border: 1px solid #666; border-top-color: #808080; margin: -1px 0 5px; padding: 2px 0 0; white-space: nowrap; }
.map { flex: 1; background: #000; border: 2px solid #ddd; border-right-color: #fff; }
.map svg { height: 100%; width: 100%; }
.scroll { width: 16px; flex: none; display: flex; flex-direction: column; align-items: center; border-left: 1px solid #fff; }
.scroll svg { width: 9px; height: 9px; margin: 4px 0; fill: none; stroke: #555; stroke-width: 2; flex: none; }
.scroll svg:last-child { margin-top: auto; }
.thumb { width: 15px; background: #cdcdcd; }
.t-log { height: 18px; margin-top: 33px; }
.t-opt { height: 83px; }
.t-vis { height: 120px; }
.t-film { flex: 1; }
.command .scroll { padding-bottom: 6px; }

.panels { width: 340px; flex: none; margin-left: 6px; display: flex; flex-direction: column; gap: 6px; padding-bottom: 1px; }
.panel { border-left: 1px solid #808080; border-right: 1px solid #999; overflow: hidden; display: flex; flex-direction: column; }
.p-options { height: 265px; flex: none; }
.p-find { height: 360px; flex: none; }
.p-vis { flex: 1; min-height: 0; }
.panel h2 { height: 18px; flex: none; display: flex; align-items: center; border-top: 1px solid #808080; background: linear-gradient(#e9e9e9, #bababa); padding: 0 8px 3px 10px; font: 11px/14px "Open Sans", sans-serif; color: #101030; position: relative; }
.panel h2::before { content: ""; position: absolute; left: 3px; top: 3px; width: 3px; height: 8px; background: repeating-linear-gradient(#0078d7 0 3px, transparent 3px 5px); }
.pc { margin-left: auto; display: flex; gap: 10px; align-items: center; font: bold 9px/10px "DejaVu Sans", sans-serif; color: #000; }
.pc svg { width: 8px; height: 9px; }
.pc span + span { margin-left: -5px; }
.pbody { flex: 1; min-height: 0; display: flex; }
.framed { border: 1px solid #666; border-bottom: 0; }
.sel { appearance: none; border: 1px solid #adadad; border-radius: 0; background: #e1e1e1 url("data:image/svg+xml,%3Csvg xmlns='http://www.w3.org/2000/svg' width='10' height='6'%3E%3Cpath d='M1 1l4 4 4-4' fill='none' stroke='%23555'/%3E%3C/svg%3E") no-repeat right 4px center; height: 21px; padding: 0 14px 0 3px; }
.sel.white { background-color: #fff; border-color: #7a7a7a; }
.sel:disabled { background-color: #ccc; border-color: #bfbfbf; color: #838383; opacity: 1; }
.btn { height: 20px; border: 1px solid #adadad; background: #e1e1e1; padding: 0; white-space: nowrap; text-align: center; }
.btn:disabled { background: #ccc; border-color: #bfbfbf; color: #838383; }
.field { height: 22px; border: 1px solid #808080; border-radius: 0; box-shadow: inset 0 0 0 1px #fff, inset 2px 2px 0 0 #666, inset -2px -2px 0 0 #ddd; background: #fff; padding: 0 4px; min-width: 0; }
.field:disabled { background: #f0f0f0; border-color: #ccc; }
input[type=checkbox] { appearance: none; width: 13px; height: 13px; border: 1px solid #333; background: #fff; flex: none; }
input[type=checkbox]:disabled { border-color: #ccc; }
input[type=checkbox]:checked { background: #fff url("data:image/svg+xml,%3Csvg xmlns='http://www.w3.org/2000/svg' width='11' height='11'%3E%3Cpath d='M1.500 5.500l3 3 5-6' fill='none' stroke='%23333' stroke-width='1.300'/%3E%3C/svg%3E") center no-repeat; }
input[type=radio] { appearance: none; width: 13px; height: 13px; border: 1px solid #333; border-radius: 50%; background: #fff; }
input[type=radio]:checked { background: radial-gradient(#333 0 3px, #fff 4px); }
label { display: flex; align-items: center; gap: 4px; white-space: nowrap; }

.opts { flex: 1; padding: 18px 0 0 8px; display: flex; flex-direction: column; align-items: flex-start; min-width: 0; }
.o-class { margin: 5px 0 12px 28px; }
.o-class .sel { width: 150px; }
.o-sub { display: flex; align-items: center; gap: 8px; margin-left: 8px; }
.subsel { position: relative; }
.subsel .sel { width: 150px; height: 24px; padding-left: 20px; }
.subsel .box { position: absolute; left: 5px; top: 5px; width: 11px; height: 14px; border: 1px solid #000; }
.swatch { width: 12px; height: 13px; background: #000; border: 1px solid #777; box-shadow: inset 1px 1px 0 #fff, inset -2px -2px 0 #aaa; display: block; }
.swatch.on { box-shadow: inset 2px 2px 0 #999, inset -1px -1px 0 #fff; background: #fff; }
.swatch.on.c-red { background: #ff2626; }
.swatch.on.c-yel { background: #ff0; }
.o-mirror { display: flex; align-items: center; margin-top: 43px; width: 191px; justify-content: space-between; }
.o-mirror .btn { width: 85px; }
.o-place { display: flex; align-items: center; width: 185px; justify-content: space-between; margin-top: 23px; }
.o-place .field { width: 94px; }
.otree { width: 196px; height: 60px; margin-top: 11px; border: 2px solid #828790; background: #fff; padding: 1px 0 0 7px; }
.otree li, .tree li { display: flex; align-items: center; height: 16px; white-space: nowrap; }
.otree input[type=checkbox], .tree input[type=checkbox] { width: 11px; height: 11px; border-color: #777; }
.otree svg { width: 16px; height: 14px; margin: 0 4px 0 1px; }
.otree .sub { padding-left: 23px; }
.exp { width: 9px; height: 9px; border: 1px solid #999; flex: none; background: linear-gradient(#335, #335) center / 5px 1px no-repeat, linear-gradient(#335, #335) center / 1px 5px no-repeat, #f4f4f4; }
.exp.minus { background: linear-gradient(#335, #335) center / 5px 1px no-repeat, #f4f4f4; }
.dots { width: 6px; border-top: 1px dotted #888; margin: 0 2px 0 1px; flex: none; }
.otree .sub .dots { width: 10px; }

.find { flex-direction: column; padding: 7px 0 0 7px; color: #000; align-items: flex-start; }
.filter { width: 189px; padding: 6px 0 3px 7px; }
.allrow { display: flex; gap: 13px; margin-bottom: 3px; }
.allrow .btn { width: 44px; height: 14px; line-height: 12px; }
.checks { display: grid; grid-template-columns: 84px 1fr; grid-auto-rows: 22px; color: #6d6d6d; }
.byname { width: 189px; padding: 3px 0 9px 6px; margin-top: 5px; }
.bn1, .bn2 { display: flex; gap: 4px; align-items: center; }
.bn1 .sel:first-child { width: 122px; }
.bn1 .sel:last-child { width: 52px; }
.bn2 .field { width: 108px; margin-left: 2px; }
.bn2 label { width: 8px; }
.bn2 .btn { width: 48px; margin-left: 1px; }
.query { width: 90px; margin: 15px 0 0 1px; }
.vis { flex-direction: column; color: #000; }
.views { display: flex; position: relative; margin: 14px 0 0 1px; height: 21px; align-items: center; }
.views label { width: 42px; }
.views .sel { width: 157px; }
.mark { position: absolute; left: 5px; top: 19px; width: 209px; height: 8px; border-radius: 4px; background: #ed1c24; }
.vt { border-collapse: collapse; table-layout: fixed; width: 201px; }
.vt tr { height: 22px; }
.vt th, .vt td { width: 21px; padding: 0; font-weight: normal; text-align: center; white-space: nowrap; }
.vt th { text-decoration: underline; direction: rtl; text-align: right; padding-right: 3px; }
.vt .l { width: 42px; text-align: left; padding-left: 1px; direction: ltr; }
.vt td:nth-child(2), .vt th:nth-child(2) { width: 33px; }
.vt th:not(.l) { text-align: start; }
.vt .r { padding-right: 10px; }
.vt input, .vt .swatch { display: block; margin: 0 auto; }
.layers { flex: 1; min-height: 0; display: flex; justify-content: space-between; border: 1px solid #777; border-bottom: 0; overflow: hidden; align-items: stretch; margin-top: 5px; }
.layers .vt { align-self: flex-start; margin-left: 1px; }

.status { height: 18px; flex: none; display: flex; gap: 2px; border-top: 2px solid #888; line-height: 16px; text-align: center; }
.status span { border-left: 1px solid #777; border-right: 1px solid #fff; overflow: hidden; }
.s-msg { flex: 1; text-align: left; padding-left: 2px; }
.s-green { width: 51px; background: #0f0; }
.s-a { width: 132px; }
.s-layer { width: 121px; }
.s-xy { width: 132px; }
.status button { width: 15px; border: 1px solid #555; border-width: 0 2px 2px 1px; }
.s-b { width: 102px; }
.s-c { width: 41px; }
.s-mode { width: 121px; }
.s-off { width: 71px; }
.s-drc { width: 51px; background: #f00; color: #600; }
.s-n { width: 43px; }
.watermark { position: absolute; right: 8px; bottom: 9px; font: 15px/20px "Liberation Sans", sans-serif; color: #ccc; text-shadow: 1px 1px 1px #999; opacity: .7; }
.ink { position: absolute; left: 0; top: 0; width: 700px; height: 60px; pointer-events: none; }

.dialog { position: absolute; left: 880px; top: 229px; width: 647px; height: 575px; background: #f0f0f0; border: 1px solid #266212; border-top: 0; display: flex; flex-direction: column; }
.dialog > header { height: 31px; flex: none; background: #266212; color: #fff; display: flex; align-items: center; padding: 0 17px 0 7px; }
.dialog > header h2 { flex: 1; font: 12px/16px "Noto Sans", sans-serif; }
.dialog > header button { margin-left: 34px; }
.dialog > header button svg { stroke: #fff; }
.dicon { width: 17px; height: 18px; margin-right: 5px; }
.tabs { display: flex; align-items: flex-end; margin: 11px 0 0 15px; height: 20px; flex: none; }
.tabs button { height: 18px; border: 1px solid #d9d9d9; border-bottom: 0; padding: 0 2px; white-space: nowrap; }
.tabs .active { height: 20px; background: #fff; padding: 0 5px; border-right: 0; }
.tabpanel { display: grid; grid-template-columns: 372px 210px; gap: 14px; height: 451px; flex: none; margin: 0 16px 0 15px; border: 1px solid #dcdcdc; border-right: 0; border-top: 4px solid #fff; padding: 6px 0 0 7px; }
.films { height: 432px; padding: 15px 7px 0 14px; display: block; }
.films legend { margin-left: -8px; }
.frow { display: flex; justify-content: space-between; margin-bottom: 2px; }
.frow .btn:first-child { width: 93px; }
.frow .btn:last-child { width: 110px; }
.treebox { width: 337px; height: 219px; border: 2px solid #828790; background: #fff; display: flex; overflow: hidden; }
.tree { flex: 1; padding: 1px 0 0 7px; }
.tree li svg { width: 16px; height: 14px; margin: 0 4px 0 1px; }
.tree li span:last-child { padding: 0 2px; line-height: 15px; }
.tree .cur span:last-child { background: #0078d7; color: #fff; }
.acts { display: flex; gap: 9px; margin: 12px 0 15px; }
.acts .btn { width: 61px; }
.chk { margin: 0 0 7px 6px; gap: 3px; }
.dyn { display: block; width: 170px; margin-left: 7px; text-align: left; padding-left: 6px; }
.create { width: 85px; height: 31px; margin: 13px 0 0 49px; display: block; }
.fopts { height: 438px; border-bottom: 0; padding: 3px 0 0 6px; }
.f { height: 22px; display: grid; grid-template-columns: 98px 80px; align-items: center; padding-left: 7px; white-space: nowrap; }
.f.g { grid-template-columns: 112px 66px; }
.f.gap { margin-bottom: 11px; }
.f.gap2 { margin-bottom: 22px; }
.f.gap3 { margin-bottom: 9px; }
.yy { padding-left: 38px; }
.rot { width: 45px; }
.rad { gap: 3px; }
.spin { display: flex; width: 47px; height: 21px; border: 1px solid #888; background: #f0f0f0; }
.spin input { width: 29px; border: 1px solid #666; padding: 0 2px; background: #fff; }
.spin span { display: flex; flex-direction: column; flex: 1; gap: 1px; }
.spin button { height: 9px; font-size: 9px; line-height: 7px; border: 1px solid #999; }
.c { height: 22px; gap: 4px; }
.c.off { color: #6d6d6d; }
.dbtns { display: flex; padding: 14px 0 0 22px; height: 39px; flex: none; }
.dbtns .btn { width: 61px; margin-right: 23px; }
.dbtns .ok { border: 2px solid #0078d7; }
.dbtns .ap { width: 69px; margin-right: 22px; }
.dbtns .help { margin-left: 63px; }
.dstatus { flex: 1; border-top: 1px solid #d7d7d7; display: flex; justify-content: space-between; align-items: flex-end; position: relative; }
.dstatus span { width: 34px; height: 20px; border-right: 1px solid #d7d7d7; }
.dstatus svg { width: 9px; height: 9px; margin: 2px; }
.okmark { position: absolute; left: 17px; top: -2px; width: 84px; height: 8px; border-radius: 4px; background: #ed1c24; }
.ctx { position: absolute; left: 209px; top: 213px; width: 242px; background: #f2f2f2; border: 1px solid #ccc; padding: 2px; box-shadow: 3px 3px 2px #0009; }
.ctx button { display: block; width: 100%; height: 22px; text-align: left; padding-left: 32px; font: 12px/16px "Noto Sans", sans-serif; color: #111; }
.addmark { position: absolute; left: 15px; top: 62px; width: 64px; height: 8px; }
```
FILE: script.js
```js
// Layer rows of the Visibility panel
const layerBody = document.querySelector('#layers tbody');
for (const name of ['Top', 'Art02', 'Art03', 'Art04', 'Art05', 'Art06', 'Art07', 'Bottom', 'Soldermask']) {
  let cells = '';
  for (const [i, col] of ['Plan', 'Etch', 'Via', 'Pin', 'Drc'].entries()) {
    const on = name === 'Top' && i > 0 ? (i === 4 ? ' on c-yel' : ' on c-red') : '';
    cells += `<td><button class="swatch${on}" aria-label="${name} ${col}"></button></td>`;
  }
  const label = name === 'Soldermask' ? '' : name;
  layerBody.insertAdjacentHTML('beforeend', `<tr><td class="l">${label}</td><td></td>${cells}<td><input type="checkbox" aria-label="${name} all"></td></tr>`);
}

// Film list
const filmNames = ['adb', 'adt', 'art01', 'art02', 'art03', 'art04', 'art05', 'art06', 'art07', 'art08', 'drill', 'pastbotm', 'pasttop', 'silkbotm'];
document.getElementById('films').innerHTML = filmNames.map(f =>
  `<li${f === 'art04' ? ' class="cur"' : ''}><span class="exp"></span><span class="dots"></span><input type="checkbox" aria-label="${f}"><svg><use href="#folder"/></svg><span>${f}</span></li>`).join('');

// Board drawing, in units of a third of a pixel
let seed = 7;
const rnd = () => (seed = (seed * 16807) % 2147483647) / 2147483647;
const R = (c, x, y, w, h) => `<rect class="${c}" x="${x}" y="${y}" width="${w}" height="${h}"/>`;
const P = (c, d) => `<path class="${c}" d="${d}"/>`;
const rects = (c, list) => list.map(a => R(c, ...a)).join('');
const capH = ([x, y, k]) => P(k ? 'yl' : '', `M${x + 12} ${y}h-12v21h39v-21h-12`) + rects(k ? 'olv' : 'pad', [[x + 7, y + 5, 10, 10], [x + 23, y + 5, 10, 10]]);
const capV = ([x, y, k]) => P(k ? 'yl' : '', `M${x} ${y + 12}v-12h19v38h-19v-12`) + rects(k ? 'olv' : 'pad', [[x + 5, y + 5, 10, 10], [x + 5, y + 23, 10, 10]]);
const bow = (x, y, w = 58, h = 56) => P('yl', `M${x} ${y}l${w} ${h}v${-h}l${-w} ${h}zM${x + w * .35 | 0} ${y + h * .3 | 0}v${h * .4 | 0}M${x + w * .65 | 0} ${y + h * .3 | 0}v${h * .4 | 0}`);
const cluster = (x, y, w, h, n) => {
  let s = '';
  for (let i = 0; i < n; i++) {
    const bw = Math.min(w, 58), bh = Math.min(h, 56);
    s += bow(x + rnd() * (w - bw) | 0, y + rnd() * (h - bh) | 0, bw, bh);
    if (i % 2) s += R('ylf', x + w * .1 + rnd() * w * .7 | 0, y + h * .2 + rnd() * h * .4 | 0, 9 + rnd() * 12 | 0, 12 + rnd() * 18 | 0);
  }
  return s;
};
const grid = (x, y, w, h, step, size, fill) => {
  let s = '';
  for (let j = y; j < y + h; j += step) for (let i = x; i < x + w; i += step) {
    const r = rnd();
    if (r < fill) s += R('red', i, j, size, size);
    else if (r < fill + .14) s += R('gry', i + 3, j + 3, size, size);
  }
  return s;
};
const conn = (x, y) => {
  let s = R('', x, y, 262, 122);
  for (const row of [2, 83]) for (const [dx, w] of [[47, 9], [59, 9], [71, 9], [83, 18], [104, 9], [116, 9], [128, 18], [149, 9], [161, 9], [173, 18], [194, 9], [206, 9]]) s += R('pad', x + dx, y + row, w, 33);
  return s + rects('pad', [[x + 5, y + 42, 15, 38], [x + 242, y + 42, 15, 38]]) + rects('gry', [[x + 30, y + 24, 5, 5], [x + 234, y + 24, 5, 5]]);
};
const hole = (x, y) => R('', x - 36, y - 33, 69, 69) + `<circle class="hole" cx="${x}" cy="${y}" r="24"/>` + P('', `M${x - 60} ${y}h36M${x + 24} ${y}h36M${x} ${y - 60}v36M${x} ${y + 24}v36`);

let upper = P('', 'M80 169H890Q936 172 936 215V2370Q930 2410 890 2416H80Q40 2410 34 2370V215Q38 172 80 169Z');
upper += conn(262, 37) + conn(511, 204) + hole(105, 234) + hole(867, 234);
upper += rects('pad', [[153, 462, 105, 105], [156, 411, 15, 33], [184, 411, 15, 33], [212, 411, 15, 33], [240, 411, 15, 33], [156, 582, 15, 33], [184, 582, 15, 33], [212, 582, 15, 33], [240, 582, 15, 33], [291, 474, 33, 27], [342, 474, 33, 27], [291, 510, 33, 27], [342, 510, 33, 27], [396, 468, 21, 39], [453, 468, 21, 39], [399, 519, 9, 9], [416, 519, 9, 9], [433, 519, 9, 9], [450, 519, 9, 9], [135, 300, 21, 15], [135, 321, 21, 15], [135, 342, 21, 15], [197, 300, 21, 15], [197, 342, 21, 15], [807, 402, 45, 27], [132, 1056, 27, 21], [132, 1095, 27, 21], [78, 1134, 15, 22], [57, 1184, 15, 20], [99, 1184, 15, 20]]);
for (let i = 0; i < 6; i++) upper += rects('pad', [[635 + i * 9, 381, 4, 10], [619, 340 + i * 9, 10, 4], [690, 340 + i * 9, 10, 4]]);
upper += rects('', [[136, 427, 139, 180], [286, 472, 94, 72], [388, 466, 91, 49], [625, 325, 70, 69], [799, 388, 62, 57], [239, 664, 342, 342], [640, 586, 229, 327], [157, 297, 37, 67], [49, 1156, 70, 27], [226, 1123, 42, 42]]);
upper += grid(233, 1130, 27, 27, 10, 4, 1);
for (const [x, y, w, h] of [[246, 670, 330, 16], [246, 984, 330, 16], [246, 688, 16, 294], [562, 688, 16, 294]]) upper += grid(x, y, w, h, 9, 6, .97);
upper += grid(278, 700, 275, 270, 15, 7, .78) + grid(285, 707, 260, 255, 30, 5, .1);
for (const [x, y] of [[645, 592], [770, 592], [645, 768], [770, 768]]) upper += grid(x, y, 96, 138, 12, 6, .62);
upper += grid(405, 600, 165, 60, 11, 5, .15);
for (let i = 0; i < 6; i++) {
  upper += P('tr', `M${583 + i * 8} ${700 - i * 6}V${602 + i * 3}L${628 + i * 3} ${556 + i * 9}H${i ? 670 + i * 10 : 785}V${600 + i * 8}`);
  upper += P('tr', `M575 ${700 + i * 9}H${600 + i * 3}L${640} ${690 + i * 14}H${720 + i * 8}l${20} -20V${640 + i * 10}`);
  upper += P('tr', `M575 ${788 + i * 8}H${600 + i * 3}L640 ${830 + i * 14}H${700}`);
  upper += P('tr', `M600 ${930 + i * 8}l25 ${15}H${750 - i * 6}l30 45`);
}
for (let i = 0; i < 9; i++) upper += P('tr', `M${408 + i * 18} 690v${-20 - (i * 13) % 50}`);
upper += P('tr', 'M670 632h110M640 920L600 870M640 932H820L870 913M790 770V620M828 445v20M310 1000v20M878 900v22h-25');
upper += P('tr', 'M660 1180L760 1085M690 1190L800 1085M720 1190L830 1085');
upper += [[211, 183, 1], [325, 178], [286, 205], [325, 203], [85, 340, 1], [88, 366, 1], [235, 349], [235, 372], [181, 381], [211, 630], [157, 691], [157, 715], [154, 747], [169, 925, 1], [169, 951], [169, 979], [472, 1033], [334, 1104], [448, 1164], [496, 1164], [715, 346], [715, 370], [772, 358], [817, 337], [817, 358], [865, 343], [802, 457], [613, 415], [613, 437], [709, 558], [748, 558], [790, 558], [595, 186, 1], [130, 1153], [130, 1177], [181, 1177], [226, 1177],
  [-290, 180], [-290, 203], [-168, 218], [-168, 243]].map(capH).join('');
upper += [[79, 292], [103, 292], [223, 301, 1], [250, 304], [277, 418], [310, 569], [334, 569], [283, 590], [160, 634], [184, 634], [406, 610], [655, 418], [682, 418], [745, 405], [769, 408], [874, 376], [169, 1064], [193, 1064], [217, 1064], [241, 1064], [265, 1064], [289, 1064], [181, 1135], [1023, 886]].map(capV).join('');
upper += '<text transform="translate(798 430) rotate(90)">DPS_IQFOOTPOL</text>';
upper += P('ylf', 'M300 735l40 30 30-20v60l-30-15-40 20zM534 870l35 20 35-20v60l-30-15-40 10zM600 1005h130v70H600zM740 1005h80v30h-80zM612 290h96v28h-96zM580 205h66v14h-66z');
upper += cluster(570, 195, 90, 58, 8) + cluster(606, 287, 108, 58, 14) + bow(295, 512) + bow(460, 616) + bow(700, 664) + bow(349, 700, 58, 64) + bow(349, 766, 58, 64) + cluster(295, 730, 72, 80, 6) + bow(274, 895, 60, 64) + bow(277, 899, 50, 50) + cluster(484, 865, 150, 80, 12) + bow(542, 937) + bow(755, 943) + bow(523, 990) + cluster(577, 995, 290, 95, 44) + cluster(541, 1110, 215, 130, 24);

let low = hole(105, 1176) + hole(867, 1176);
low += rects('pad', [[81, 72, 39, 15], [81, 102, 39, 15], [81, 129, 39, 15], [72, 294, 39, 15], [72, 321, 39, 15], [72, 348, 39, 15], [96, 192, 18, 15], [96, 234, 18, 15], [49, 213, 18, 15], [225, 90, 9, 33], [246, 90, 9, 33], [267, 90, 9, 33], [225, 144, 9, 33], [267, 144, 9, 33], [300, 82, 21, 15], [300, 112, 21, 15], [300, 142, 21, 15], [300, 174, 21, 15], [216, 225, 21, 15], [252, 222, 21, 15], [216, 255, 21, 15], [252, 255, 21, 15], [288, 213, 27, 45], [345, 213, 27, 45], [678, 153, 27, 33], [720, 153, 27, 33], [678, 204, 27, 33], [720, 204, 27, 33], [789, 145, 33, 93], [849, 145, 33, 93], [726, 117, 15, 21], [759, 117, 15, 21], [408, 297, 15, 21], [441, 297, 15, 21], [396, 366, 15, 21], [375, 414, 15, 18], [417, 414, 15, 18], [246, 412, 33, 91], [309, 412, 33, 91], [186, 480, 15, 21], [216, 480, 15, 21], [366, 318, 9, 9], [366, 336, 9, 9], [366, 534, 9, 9], [366, 549, 9, 9], [456, 640, 15, 20], [489, 640, 15, 20], [465, 697, 15, 20], [498, 697, 15, 20], [450, 772, 15, 20], [483, 772, 15, 20], [402, 660, 21, 15], [402, 690, 21, 15], [699, 591, 15, 21], [486, 838, 63, 44], [486, 921, 63, 44], [492, 978, 27, 57], [552, 978, 27, 57], [87, 1017, 15, 21], [120, 1017, 15, 21], [255, 1023, 39, 30], [840, 741, 82, 20], [840, 855, 82, 20], [840, 810, 18, 27], [243, 745, 46, 60], [330, 745, 46, 60], [345, 612, 15, 100], [363, 612, 18, 100], [190, 628, 27, 30]]);
low += rects('gry', [[48, 57, 15, 22], [48, 138, 15, 22], [39, 276, 15, 22], [39, 360, 15, 22]]);
for (let i = 0; i < 11; i++) low += rects('pad', [[597 + i * 20, 279, 9, 25], [597 + i * 20, 531, 9, 25], [561, 309 + i * 20, 27, 9], [816, 309 + i * 20, 24, 9]]);
for (let i = 0; i < 4; i++) low += rects('pad', [[255, 526 + i * 14, 22, 9], [317, 526 + i * 14, 22, 9]]);
for (const [x, y] of [[430, 25], [520, 25], [430, 153], [520, 153]]) { low += R('olv', x, y, 20, 62); for (let i = 0; i < 5; i++) low += R('red', x + 5, y + 4 + i * 12, 10, 5); }
low += R('ghost', 193, 403, 97, 135) + P('ghost', 'M88 655l28-27h48v82H88zM220 700h73v138h-58l-15-15z');
low += rects('', [[46, 55, 58, 111], [64, 187, 31, 70], [37, 274, 58, 111], [427, 60, 117, 118], [439, 76, 94, 88], [453, 90, 66, 60], [674, 151, 71, 93], [783, 142, 106, 102], [560, 277, 282, 282], [367, 388, 70, 28], [241, 409, 106, 102], [277, 520, 39, 66], [34, 847, 130, 222], [250, 721, 117, 117], [317, 610, 69, 103], [457, 844, 118, 118], [241, 943, 67, 105], [772, 715, 163, 210], [838, 739, 85, 130], [901, 878, 22, 47], [512, 1060, 38, 36]]);
low += R('yl', 415, 49, 139, 144) + '<circle cx="487" cy="120" r="20"/>';
low += P('', 'M300 211h62M300 265h62M214 115v40M287 115v40M245 154h15M772 905h130M772 915h130M772 725h66M772 820h66M838 750h85M838 760h85M96 820h24M96 830h24M96 1087h24M96 1100h24M302 280v30M340 280v30M317 640h69M317 682h69M428 298v20l12-10zM472 642v18l12-9zM496 698v18l-10-9zM470 773v18l12-9zM106 1018v20l12-10zM52 742q10-8 20 6l-20 4z');
low += P('tr', 'M523 418V493L550 520H588M620 545V640L640 690L740 785M867 195V322L855 335H830M650 225V255L685 275V300M735 225V255L780 275V300M803 195V295M313 1090V1220');
for (let i = 0; i < 8; i++) low += P('tr', `M805 ${357 + i * 20}h30`);
low += P('tr', 'M600 105L700 20M630 105L740 10M570 0v50');
low += [[130, 94], [226, 6], [181, 6], [130, 6], [229, 190], [145, 451], [193, 451], [451, 391], [451, 541], [463, 616], [460, 733], [94, 704], [94, 733], [94, 757], [619, 217], [619, 240], [196, 563], [196, 585], [406, 844], [406, 865], [406, 886], [246, 892], [280, 892], [196, 890], [785, 723], [775, 820], [817, 898]].map(capH).join('');
low += [[187, 91], [184, 157], [190, 232], [205, 289], [229, 289], [256, 289], [187, 334], [211, 334], [235, 334], [259, 334], [301, 334], [321, 334], [121, 307], [142, 520], [169, 520], [169, 566], [382, 532], [751, 148], [480, 1108], [504, 1108], [421, 1108], [445, 1108], [343, 1103], [367, 1103], [214, 820], [214, 780]].map(capV).join('');
low += '<text transform="translate(156 640) rotate(-90)">SOT23_8</text>';
low += rects('olv', [[51, 717, 21, 15], [51, 750, 21, 15]]);
low += P('ylf', 'M330 940h145v50H330zM345 990h40v70h-40zM190 935h90v35h-90zM400 1060h60v40h-60zM325 650h50v50h-50zM255 670h50v40h-50zM280 610h50v25h-50zM575 110l25 15 35-20v60l-20-10-35 20zM740 560h45v50h-45z');
low += cluster(541, -10, 215, 80, 18) + cluster(562, 94, 82, 100, 12) + bow(589, 580, 58, 78) + bow(616, 664) + bow(667, 718) + bow(739, 793) + cluster(730, 530, 80, 100, 10) + bow(752, 530) + cluster(760, 203, 70, 60, 4) + bow(205, 512) + cluster(115, 600, 115, 80, 8) + cluster(135, 700, 70, 75, 7) + bow(73, 667) + cluster(230, 592, 155, 130, 22) + bow(235, 748) + bow(322, 748) + cluster(145, 803, 72, 84, 4) + cluster(148, 900, 160, 95, 20) + cluster(310, 930, 165, 150, 40) + bow(160, 1023) + cluster(500, 1046, 62, 56, 3) + cluster(265, 1070, 205, 70, 20) + cluster(190, 1120, 205, 105, 20);
low += R('pad', 411, 1008, 45, 60) + R('', 379, 991, 94, 93) + rects('', [[285, 1146, 40, 70], [241, 943, 67, 105]]);

document.getElementById('board').insertAdjacentHTML('beforeend',
  `<g transform="translate(410 23) scale(.33333)"><g class="brd">${upper}<g transform="translate(0 1170)">${low}</g></g></g>`);
```
